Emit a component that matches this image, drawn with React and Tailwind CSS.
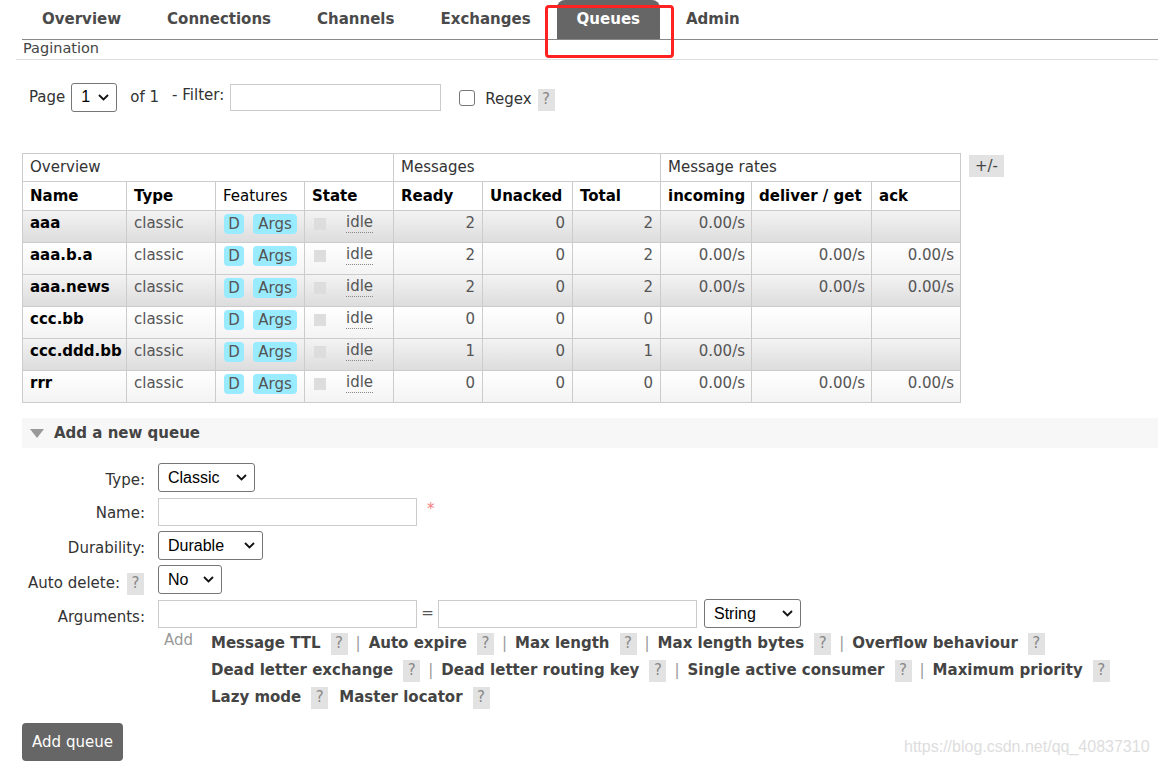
import React from 'react';

const tabs = ['Overview', 'Connections', 'Channels', 'Exchanges', 'Queues', 'Admin'];

const rows = [
  { name: 'aaa', ready: 2, unacked: 0, total: 2, incoming: '0.00/s', deliver: '', ack: '' },
  { name: 'aaa.b.a', ready: 2, unacked: 0, total: 2, incoming: '0.00/s', deliver: '0.00/s', ack: '0.00/s' },
  { name: 'aaa.news', ready: 2, unacked: 0, total: 2, incoming: '0.00/s', deliver: '0.00/s', ack: '0.00/s' },
  { name: 'ccc.bb', ready: 0, unacked: 0, total: 0, incoming: '', deliver: '', ack: '' },
  { name: 'ccc.ddd.bb', ready: 1, unacked: 0, total: 1, incoming: '0.00/s', deliver: '', ack: '' },
  { name: 'rrr', ready: 0, unacked: 0, total: 0, incoming: '0.00/s', deliver: '0.00/s', ack: '0.00/s' },
];

const argLines = [
  [['Message TTL', true], ['Auto expire', true], ['Max length', true], ['Max length bytes', true], ['Overflow behaviour', false]],
  [['Dead letter exchange', true], ['Dead letter routing key', true], ['Single active consumer', true], ['Maximum priority', false]],
  [['Lazy mode', false], ['Master locator', false]],
];

const Help = ({ className = '' }) => (
  <span className={`inline-flex items-center justify-center w-[17px] h-[22px] bg-[#e2e2e2] text-[#888] font-normal text-[15px] ${className}`}>?</span>
);

const Chevron = () => (
  <svg width="11" height="7" viewBox="0 0 11 7" className="shrink-0">
    <path d="M1 1l4.5 4.5L10 1" fill="none" stroke="#111" strokeWidth="1.8" />
  </svg>
);

const FakeSelect = ({ label, width, className = '' }) => (
  <div
    className={`flex items-center justify-between h-[29px] border border-[#767676] rounded-[3px] bg-white pl-[9px] pr-[7px] text-[16px] text-black ${className}`}
    style={{ width, fontFamily: '"Liberation Sans", Arial, sans-serif' }}
  >
    <span>{label}</span>
    <Chevron />
  </div>
);

const Badge = ({ children, className = '' }) => (
  <span className={`inline-flex items-center justify-center h-[20px] rounded-[4px] bg-[#99ebff] text-[#555] ${className}`}>{children}</span>
);

export default function App() {
  return (
    <div className="relative w-full h-[763px] overflow-hidden bg-white text-[15px] text-[#333]" style={{ fontFamily: '"DejaVu Sans", Verdana, sans-serif' }}>
      {/* tabs */}
      <div className="ml-[22px] flex gap-[6px] h-[40px] border-b border-[#888]">
        {tabs.map((t) => (
          <div
            key={t}
            className={`px-[20px] h-[39px] flex items-center font-bold rounded-t-[8px] ${t === 'Queues' ? 'bg-[#666] text-white' : 'text-[#4a4a4a]'}`}
          >
            {t}
          </div>
        ))}
      </div>

      <div className="ml-[16px] pl-[7px] h-[18px] leading-[16px] text-[14.5px] text-[#444] border-b border-[#ddd] pb-[1px] box-content">Pagination</div>

      {/* pagination row */}
      <div className="ml-[29px] mt-[23px] flex items-center h-[28px] text-[#333]">
        <span>Page</span>
        <FakeSelect label="1" width={46} className="ml-[6px] h-[29px]" />
        <span className="ml-[13px]">of 1</span>
        <span className="ml-[13px] -mt-[4px]">- Filter:</span>
        <div className="ml-[6px] w-[211px] h-[27px] border border-[#ccc]" />
        <span className="ml-[18px] mt-[2px] w-[16px] h-[16px] border border-[#767676] rounded-[3px] bg-white" />
        <span className="ml-[10px] mt-[5px]">Regex</span>
        <Help className="ml-[6px] mt-[5px]" />
      </div>

      {/* table */}
      <div className="ml-[22px] mt-[42px] flex items-start gap-[8px]">
        <table className="table-fixed border-collapse w-[938px]">
          <colgroup>
            {[104, 89, 89, 89, 89, 90, 88, 91, 120, 89].map((w, i) => (
              <col key={i} style={{ width: w }} />
            ))}
          </colgroup>
          <thead>
            <tr className="h-[28px]">
              <th colSpan={4} className="border border-[#ccc] font-normal text-left px-[7px] text-[#333]">Overview</th>
              <th colSpan={3} className="border border-[#ccc] font-normal text-left px-[7px] text-[#333]">Messages</th>
              <th colSpan={3} className="border border-[#ccc] font-normal text-left px-[7px] text-[#333]">Message rates</th>
            </tr>
            <tr className="h-[29px]">
              {['Name', 'Type', 'Features', 'State', 'Ready', 'Unacked', 'Total', 'incoming', 'deliver / get', 'ack'].map((h) => (
                <th key={h} className={`border border-[#ccc] text-left px-[7px] text-black ${h === 'Features' ? 'font-normal text-[#333]' : 'font-bold'}`}>{h}</th>
              ))}
            </tr>
          </thead>
          <tbody>
            {rows.map((r, i) => {
              const bg = i % 2 === 0 ? 'bg-linear-to-b from-[#f3f3f3] to-[#dcdcdc]' : 'bg-linear-to-b from-[#ffffff] to-[#f3f3f3]';
              const td = 'border border-[#ccc] align-top h-[32px] pt-[2px] leading-[20px] text-[#555]';
              return (
                <tr key={r.name} className={bg}>
                  <td className={`${td} px-[7px] font-bold text-black`}>{r.name}</td>
                  <td className={`${td} px-[7px]`}>classic</td>
                  <td className={`${td} pl-[8px]`}>
                    <div className="flex gap-[9px] pt-[1px]">
                      <Badge className="w-[20px]">D</Badge>
                      <Badge className="w-[44px]">Args</Badge>
                    </div>
                  </td>
                  <td className={`${td} pl-[9px]`}>
                    <div className="flex items-start">
                      <span className="mt-[5px] w-[12px] h-[12px] bg-[#ddd]" />
                      <span className="ml-[20px] border-b border-dotted border-[#888] leading-[19px]">idle</span>
                    </div>
                  </td>
                  <td className={`${td} text-right pr-[7px]`}>{r.ready}</td>
                  <td className={`${td} text-right pr-[7px]`}>{r.unacked}</td>
                  <td className={`${td} text-right pr-[7px]`}>{r.total}</td>
                  <td className={`${td} text-right pr-[6px]`}>{r.incoming}</td>
                  <td className={`${td} text-right pr-[6px]`}>{r.deliver}</td>
                  <td className={`${td} text-right pr-[6px]`}>{r.ack}</td>
                </tr>
              );
            })}
          </tbody>
        </table>
        <div className="mt-[2px] w-[35px] h-[22px] bg-[#e2e2e2] flex items-center justify-center text-[#444]">+/-</div>
      </div>

      {/* add a new queue */}
      <div className="ml-[22px] mt-[15px] h-[30px] bg-[#f7f7f7] flex items-center">
        <svg width="14" height="9" viewBox="0 0 14 9" className="ml-[8px]">
          <path d="M0 0h14L7 9z" fill="#999" />
        </svg>
        <span className="ml-[10px] font-bold text-[#444]">Add a new queue</span>
      </div>

      <div className="ml-[22px] mt-[15px] flex flex-col gap-[5px] text-[#333]">
        <div className="flex items-center h-[29px]">
          <div className="w-[123px] text-right pt-[6px]">Type:</div>
          <FakeSelect label="Classic" width={97} className="ml-[13px]" />
        </div>
        <div className="flex items-center h-[29px]">
          <div className="w-[123px] text-right pt-[4px]">Name:</div>
          <div className="ml-[13px] w-[259px] h-[28px] border border-[#ccc]" />
          <span className="ml-[10px] -mt-[4px] text-[#f08080]">*</span>
        </div>
        <div className="flex items-center h-[29px]">
          <div className="w-[123px] text-right pt-[6px]">Durability:</div>
          <FakeSelect label="Durable" width={105} className="ml-[13px]" />
        </div>
        <div className="flex items-center h-[29px]">
          <div className="w-[123px] flex items-center justify-end pt-[8px] whitespace-nowrap">
            <span className="mr-[7px]">Auto delete:</span>
            <Help className="mr-[1px]" />
          </div>
          <FakeSelect label="No" width={64} className="ml-[13px]" />
        </div>
        <div className="flex items-center h-[29px]">
          <div className="w-[123px] text-right pt-[8px]">Arguments:</div>
          <div className="ml-[13px] w-[259px] h-[28px] border border-[#ccc]" />
          <span className="w-[21px] text-center text-[#555]">=</span>
          <div className="w-[259px] h-[28px] border border-[#ccc]" />
          <FakeSelect label="String" width={97} className="ml-[7px]" />
        </div>
      </div>

      <div className="ml-[164px] mt-[2px] flex">
        <span className="w-[47px] text-[#999] leading-[27px] -mt-[3px]">Add</span>
        <div className="flex flex-col">
          {argLines.map((line, li) => (
            <div key={li} className="flex items-center h-[27px]">
              {line.map(([label, sep]) => (
                <span key={label} className="flex items-center">
                  <span className="font-bold text-[#444]">{label}</span>
                  <Help className="ml-[10px]" />
                  {sep ? <span className="mx-[8px] text-[#999]">|</span> : <span className="w-[11px]" />}
                </span>
              ))}
            </div>
          ))}
        </div>
      </div>

      <button className="ml-[22px] mt-[12px] w-[101px] h-[38px] rounded-[4px] bg-[#666] text-white text-[15px]">Add queue</button>

      {/* screenshot annotation and watermark */}
      <div className="absolute left-[545px] top-[5px] w-[129px] h-[53px] border-[3px] border-[#f22] rounded-[4px]" />
      <div className="absolute left-[904px] top-[735px] text-[16px] text-[#ddd]" style={{ fontFamily: '"Liberation Sans", Arial, sans-serif' }}>https://blog.csdn.net/qq_40837310</div>
    </div>
  );
}
